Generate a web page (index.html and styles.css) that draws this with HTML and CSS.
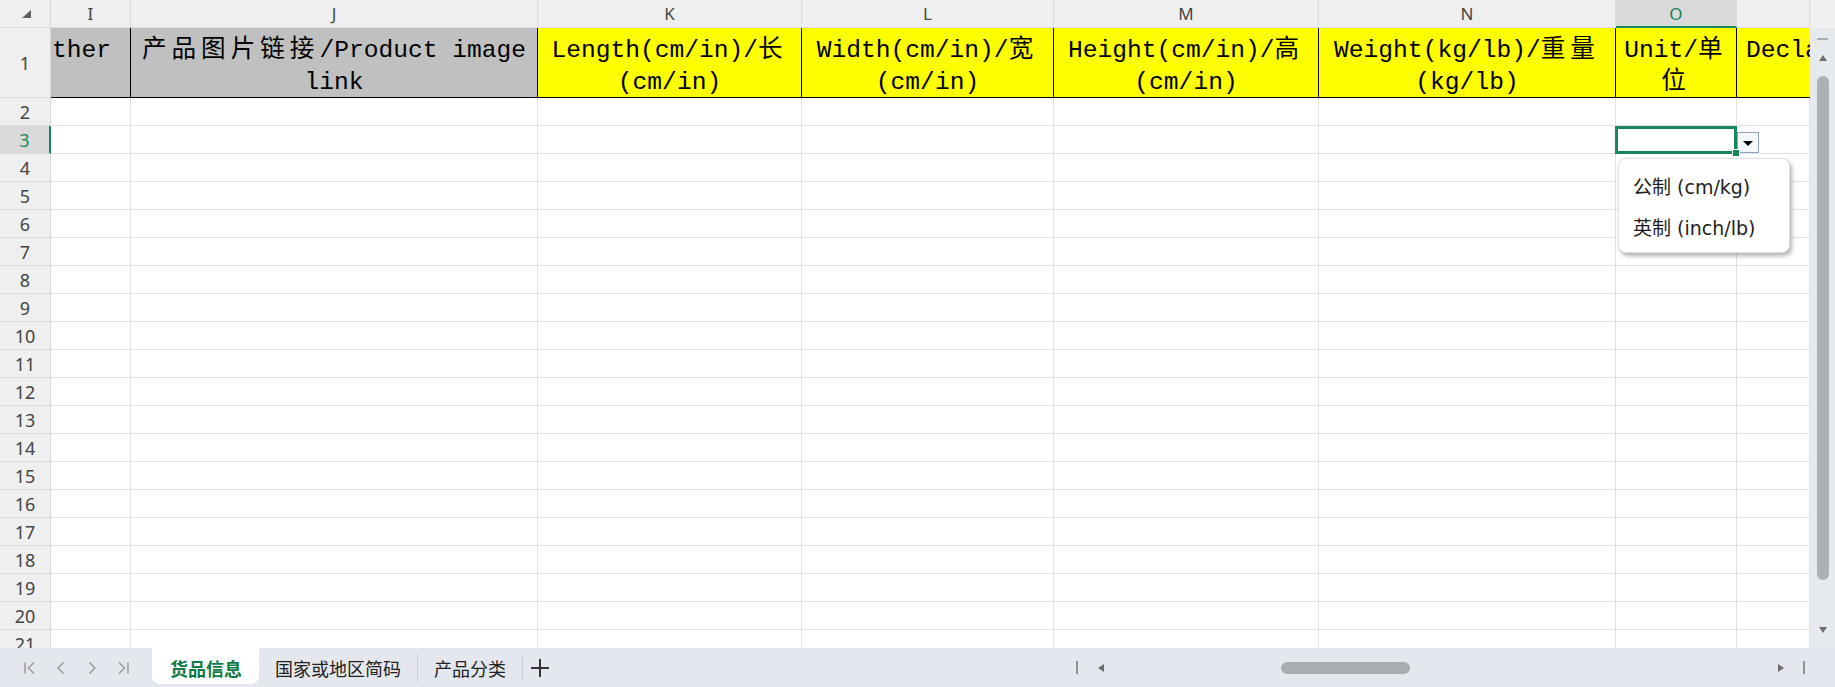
FILE: index.html
```html
<!DOCTYPE html>
<html lang="zh-CN">
<head>
    <meta charset="UTF-8">
    <title>货品信息</title>
    <link rel="stylesheet" href="styles.css">
</head>
<body>

    <div class="workbook">
        <div class="sheet-view">

            <!-- Sheet grid: column letters, title row, then data rows added by the script -->
            <div class="grid" id="grid">
                <div class="corner"><span class="corner-mark"></span></div>
                <div class="col-head">I</div>
                <div class="col-head">J</div>
                <div class="col-head">K</div>
                <div class="col-head">L</div>
                <div class="col-head">M</div>
                <div class="col-head">N</div>
                <div class="col-head active">O</div>
                <div class="col-head"></div>

                <div class="row-head">1</div>
                <div class="title gray left">ther</div>
                <div class="title gray"><span class="zh">产品图片链接</span>/Product image<br>link</div>
                <div class="title">Length(cm/in)/<span class="zh">长</span><br>(cm/in)</div>
                <div class="title">Width(cm/in)/<span class="zh">宽</span><br>(cm/in)</div>
                <div class="title">Height(cm/in)/<span class="zh">高</span><br>(cm/in)</div>
                <div class="title">Weight(kg/lb)/<span class="zh">重量</span><br>(kg/lb)</div>
                <div class="title">Unit/<span class="zh">单</span><br><span class="zh">位</span></div>
                <div class="title clip">Declared value</div>
            </div>

            <!-- Vertical scrollbar -->
            <div class="vscroll">
                <div class="vscroll-top"></div>
                <div class="vscroll-track">
                    <span class="split-mark"></span>
                    <span class="arrow-up"></span>
                    <span class="vthumb"></span>
                    <span class="arrow-down"></span>
                </div>
            </div>
        </div>

        <!-- Sheet tabs and horizontal scrollbar -->
        <div class="tabbar">
            <div class="tab-nav">
                <svg width="16" height="16" viewBox="0 0 16 16"><path d="M3 2.5v11M12 2.5L6.5 8l5.5 5.5" /></svg>
                <svg width="16" height="16" viewBox="0 0 16 16"><path d="M10.5 2.5L5 8l5.5 5.5" /></svg>
                <svg width="16" height="16" viewBox="0 0 16 16"><path d="M5.5 2.5L11 8l-5.5 5.5" /></svg>
                <svg width="16" height="16" viewBox="0 0 16 16"><path d="M4 2.5L9.5 8 4 13.5M13 2.5v11" /></svg>
            </div>
            <div class="tab active">货品信息</div>
            <div class="tab">国家或地区简码</div>
            <span class="tab-sep"></span>
            <div class="tab">产品分类</div>
            <span class="tab-sep"></span>
            <div class="tab-add">
                <svg width="22" height="22" viewBox="0 0 22 22"><path d="M11 2v18M2 11h18" /></svg>
            </div>

            <div class="hscroll">
                <span class="hbar"></span>
                <span class="arrow-left"></span>
                <div class="htrack"><span class="hthumb"></span></div>
                <span class="arrow-right"></span>
                <span class="hbar"></span>
            </div>
        </div>
    </div>

    <script>
        // Build the empty data rows 2..21 (columns I to P)
        const grid = document.getElementById('grid');
        const activeRow = 3;
        const activeCol = 6; // column O

        for (let r = 2; r <= 21; r++) {
            const head = document.createElement('div');
            head.className = r === activeRow ? 'row-head active' : 'row-head';
            head.textContent = r;
            grid.appendChild(head);

            for (let c = 0; c < 8; c++) {
                const cell = document.createElement('div');
                cell.className = 'cell';
                if (r === activeRow && c === activeCol) {
                    cell.className = 'cell selected';
                    cell.innerHTML =
                        '<div class="dd-btn"></div>' +
                        '<div class="dd-menu">' +
                            '<div class="dd-item">公制 (cm/kg)</div>' +
                            '<div class="dd-item">英制 (inch/lb)</div>' +
                        '</div>';
                }
                grid.appendChild(cell);
            }
        }
    </script>

</body>
</html>
```

FILE: styles.css
```css
* {
    margin: 0;
    padding: 0;
    box-sizing: border-box;
}

body {
    width: 1835px;
    height: 687px;
    overflow: hidden;
    font-family: 'Noto Sans', 'Noto Sans CJK SC', sans-serif;
    background-color: #fff;
    color: #222;
}

.workbook {
    display: flex;
    flex-direction: column;
    height: 687px;
}

.sheet-view {
    display: flex;
    height: 648px;
}

/* Grid */
.grid {
    flex: 1;
    display: grid;
    grid-template-columns: 51px 80px 407px 264px 252px 265px 297px 121px 73px;
    grid-template-rows: 28px 70px;
    grid-auto-rows: 28px;
    align-content: start;
    overflow: hidden;
}

.corner {
    background-color: #efefef;
    border-right: 1px solid #d8d8d8;
    border-bottom: 1px solid #dddddd;
    display: flex;
    align-items: center;
    justify-content: center;
    padding-left: 3px;
}

.corner-mark {
    width: 0;
    height: 0;
    border-left: 9px solid transparent;
    border-bottom: 8px solid #5f5f5f;
}

.col-head {
    background-color: #efefef;
    border-right: 1px solid #dcdcdc;
    border-bottom: 1px solid #dddddd;
    display: flex;
    align-items: center;
    justify-content: center;
    font-size: 17px;
    color: #444;
}

.col-head.active {
    background-color: #dadada;
    color: #15875b;
    border-bottom: 2px solid #15875b;
}

.row-head {
    background-color: #efefef;
    border-right: 1px solid #d6d6d6;
    border-bottom: 1px solid #dcdcdc;
    display: flex;
    align-items: center;
    justify-content: center;
    font-size: 18px;
    color: #444;
}

.row-head.active {
    background-color: #dadada;
    color: #15875b;
    border-right: 2px solid #15875b;
}

/* Title row */
.title {
    background-color: #ffff00;
    border-right: 1px solid #000;
    border-bottom: 1px solid #000;
    font-family: 'Liberation Mono', 'Noto Sans CJK SC', monospace;
    font-size: 24.6px;
    line-height: 32px;
    text-align: center;
    padding-top: 7px;
    color: #000;
    white-space: nowrap;
    overflow: hidden;
}

.title.gray {
    background-color: #c0c0c0;
}

.title.left {
    text-align: left;
    padding-left: 1px;
}

.title.clip {
    text-align: left;
    padding-left: 9px;
    border-right: none;
}

.zh {
    letter-spacing: 5px;
}

/* Data cells */
.cell {
    background-color: #fff;
    border-right: 1px solid #e2e2e2;
    border-bottom: 1px solid #e2e2e2;
}

.cell.selected {
    position: relative;
    z-index: 3;
}

.cell.selected::before {
    content: "";
    position: absolute;
    top: 0;
    left: -1px;
    right: -1px;
    bottom: -1px;
    border: 3px solid #15875b;
}

.cell.selected::after {
    content: "";
    position: absolute;
    right: -4px;
    bottom: -4px;
    width: 6px;
    height: 6px;
    background-color: #15875b;
    border: 1px solid #fff;
}

.dd-btn {
    position: absolute;
    left: calc(100% + 1px);
    top: 6px;
    width: 22px;
    height: 21px;
    border: 1px solid #8fa5be;
    background-color: #f5f6f8;
    display: flex;
    align-items: center;
    justify-content: center;
}

.dd-btn::after {
    content: "";
    width: 0;
    height: 0;
    margin-top: 2px;
    border-left: 5px solid transparent;
    border-right: 5px solid transparent;
    border-top: 5px solid #000;
}

.dd-menu {
    position: absolute;
    left: 2px;
    top: 32px;
    width: 172px;
    padding: 8px 0 3px;
    background-color: #fff;
    border: 1px solid #e0e0e0;
    border-radius: 8px;
    box-shadow: 2px 3px 4px rgba(0, 0, 0, 0.3);
}

.dd-item {
    height: 41px;
    line-height: 41px;
    padding-left: 14px;
    font-family: 'DejaVu Sans', 'Noto Sans CJK SC', sans-serif;
    font-size: 19px;
    color: #1e1e1e;
    white-space: nowrap;
}

/* Vertical scrollbar */
.vscroll {
    width: 25px;
    display: flex;
    flex-direction: column;
}

.vscroll-top {
    height: 28px;
    background-color: #efefef;
}

.vscroll-track {
    flex: 1;
    background-color: #e6e9ee;
    display: flex;
    flex-direction: column;
    align-items: center;
    padding-top: 10px;
}

.split-mark {
    width: 11px;
    height: 2px;
    background-color: #a9acb1;
}

.arrow-up {
    width: 0;
    height: 0;
    margin-top: 15px;
    border-left: 4px solid transparent;
    border-right: 4px solid transparent;
    border-bottom: 6px solid #6e6e6e;
}

.vthumb {
    width: 12px;
    height: 504px;
    margin-top: 15px;
    border-radius: 6px;
    background-color: #adb0b5;
}

.arrow-down {
    width: 0;
    height: 0;
    margin-top: 47px;
    border-left: 4px solid transparent;
    border-right: 4px solid transparent;
    border-top: 6px solid #6e6e6e;
}

/* Tab bar */
.tabbar {
    height: 39px;
    background-color: #e4e7ed;
    display: flex;
    align-items: center;
}

.tab-nav {
    display: flex;
    gap: 15px;
    padding-left: 22px;
    margin-right: 21px;
}

.tab-nav svg path {
    fill: none;
    stroke: #9c9c9c;
    stroke-width: 1.5;
}

.tab {
    align-self: flex-start;
    height: 36px;
    padding: 3px 16px 0;
    display: flex;
    align-items: center;
    font-size: 18px;
    color: #222;
    white-space: nowrap;
}

.tab.active {
    background-color: #fff;
    border-radius: 0 0 8px 8px;
    padding: 3px 17px 0 18px;
    color: #0e7b47;
    font-weight: bold;
}

.tab-sep {
    width: 1px;
    height: 28px;
    background-color: #c9cdd3;
}

.tab-add {
    display: flex;
    margin-left: 6px;
}

.tab-add svg path {
    fill: none;
    stroke: #333;
    stroke-width: 2;
}

/* Horizontal scrollbar */
.hscroll {
    margin-left: auto;
    margin-right: 25px;
    width: 740px;
    display: flex;
    align-items: center;
    padding: 0 5px 0 6px;
}

.hbar {
    width: 2px;
    height: 13px;
    background-color: #8e9196;
}

.arrow-left {
    width: 0;
    height: 0;
    margin-left: 20px;
    border-top: 4px solid transparent;
    border-bottom: 4px solid transparent;
    border-right: 6px solid #6e6e6e;
}

.htrack {
    flex: 1;
    margin: 0 6px;
}

.hthumb {
    display: block;
    width: 129px;
    height: 12px;
    margin-left: 171px;
    border-radius: 6px;
    background-color: #a9acb1;
}

.arrow-right {
    width: 0;
    height: 0;
    margin-right: 19px;
    border-top: 4px solid transparent;
    border-bottom: 4px solid transparent;
    border-left: 6px solid #6e6e6e;
}
```
